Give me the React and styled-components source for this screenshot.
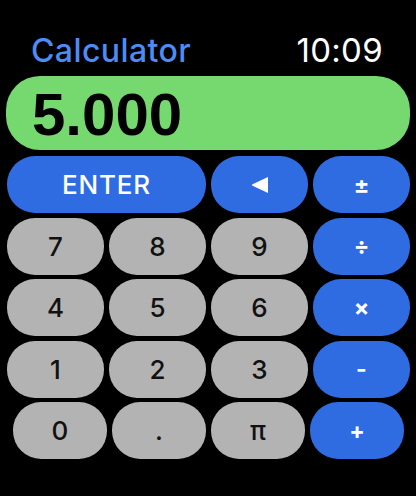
import styled, { createGlobalStyle } from "styled-components";

const GlobalStyle = createGlobalStyle`
  html, body {
    margin: 0;
    padding: 0;
    background: #000000;
  }
  body {
    font-family: Inter, "Noto Sans", "Liberation Sans", sans-serif;
  }
`;

const Screen = styled.div`
  width: 416px;
  height: 496px;
  background: #000000;
  padding: 0 6px;
  box-sizing: border-box;
`;

const Header = styled.div`
  display: flex;
  justify-content: space-between;
  align-items: flex-end;
  height: 72px;
  padding: 0 27px 0 25px;
  box-sizing: border-box;
`;

const Title = styled.div`
  font-size: 32px;
  font-weight: 500;
  color: #4d8cf5;
  line-height: 1;
  letter-spacing: 0.4px;
  padding-bottom: 5px;
`;

const Clock = styled.div`
  font-size: 33px;
  font-weight: 400;
  color: #ffffff;
  line-height: 1;
  letter-spacing: 0.3px;
  padding-bottom: 5px;
`;

const Display = styled.div`
  margin-top: 4px;
  height: 74px;
  border-radius: 34px;
  background: #76d96f;
  display: flex;
  align-items: center;
  padding-left: 26px;
`;

const DisplayValue = styled.div`
  font-family: "Liberation Sans", Arial, sans-serif;
  font-size: 60px;
  font-weight: 700;
  color: #000000;
  line-height: 1;
  padding-top: 4px;
`;

const Keypad = styled.div`
  margin-top: 6px;
  display: flex;
  flex-direction: column;
  gap: 4.5px;
  padding-left: 1px;
`;

const KeyRow = styled.div`
  display: flex;
  gap: 5px;
  padding-left: ${(p) => (p.$inset ? "6px" : "0")};
`;

const Key = styled.button`
  width: ${(p) => p.$w}px;
  height: 57px;
  border: none;
  border-radius: 28px;
  background: ${(p) => (p.$op ? "#2f6ce2" : "#b3b3b3")};
  color: ${(p) => (p.$op ? "#ffffff" : "#111111")};
  font-family: Inter, "Noto Sans", "Liberation Sans", sans-serif;
  font-size: ${(p) => (p.$small ? "23px" : "26px")};
  font-weight: ${(p) => (p.$small ? 700 : 500)};
  letter-spacing: ${(p) => (p.$wide ? "0.8px" : "0")};
  display: flex;
  align-items: center;
  justify-content: center;
  padding: 0;
`;

const BackIcon = () => (
  <svg width="19" height="18" viewBox="0 0 19 18">
    <path d="M18 1 L18 17 L2.5 9.8 Q1 9 2.5 8.2 Z" fill="#ffffff" />
  </svg>
);

const rows = [
  ["7", "8", "9", "÷"],
  ["4", "5", "6", "×"],
  ["1", "2", "3", "-"],
];

export default function App() {
  return (
    <Screen>
      <GlobalStyle />
      <Header>
        <Title>Calculator</Title>
        <Clock>10:09</Clock>
      </Header>
      <Display>
        <DisplayValue>5.000</DisplayValue>
      </Display>
      <Keypad>
        <KeyRow>
          <Key $op $wide $w={199}>ENTER</Key>
          <Key $op $w={97}>
            <BackIcon />
          </Key>
          <Key $op $small $w={97}>±</Key>
        </KeyRow>
        {rows.map((row) => (
          <KeyRow key={row[0]}>
            {row.map((k, i) => (
              <Key key={k} $op={i === 3} $small={i === 3} $w={97}>
                {k}
              </Key>
            ))}
          </KeyRow>
        ))}
        <KeyRow $inset>
          <Key $w={94}>0</Key>
          <Key $w={94}>.</Key>
          <Key $w={94}>π</Key>
          <Key $op $small $w={94}>+</Key>
        </KeyRow>
      </Keypad>
    </Screen>
  );
}
